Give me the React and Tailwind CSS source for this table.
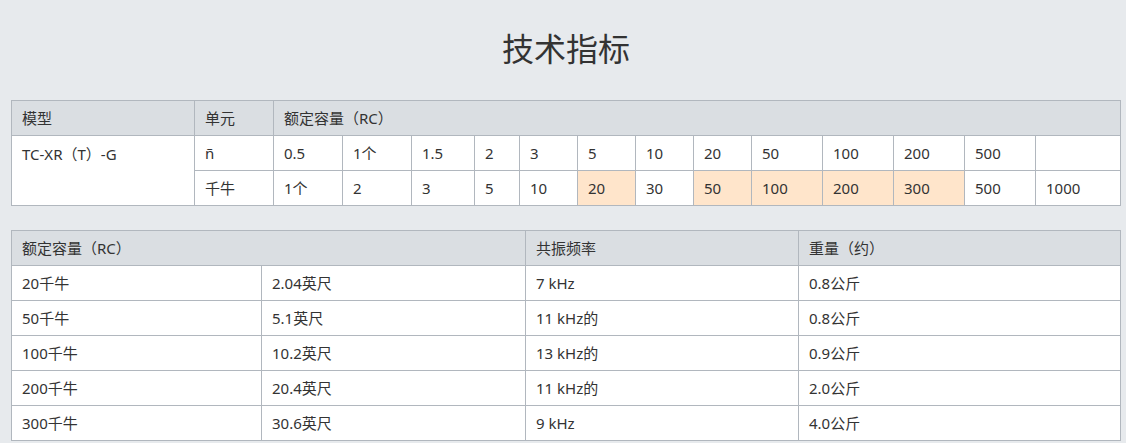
import React from 'react';

const font = { fontFamily: '"Noto Sans", "Noto Sans CJK SC", sans-serif' };

// spec table data
const row1 = ['0.5', '1个', '1.5', '2', '3', '5', '10', '20', '50', '100', '200', '500', ''];
const row2 = [
    ['1个', false], ['2', false], ['3', false], ['5', false], ['10', false], ['20', true], ['30', false],
    ['50', true], ['100', true], ['200', true], ['300', true], ['500', false], ['1000', false],
];
const cols1 = [183, 79, 69, 69, 63, 45, 58, 58, 58, 58, 71, 71, 71, 71, 85];

const specs = [
    ['20千牛', '2.04英尺', '7 kHz', '0.8公斤'],
    ['50千牛', '5.1英尺', '11 kHz的', '0.8公斤'],
    ['100千牛', '10.2英尺', '13 kHz的', '0.9公斤'],
    ['200千牛', '20.4英尺', '11 kHz的', '2.0公斤'],
    ['300千牛', '30.6英尺', '9 kHz', '4.0公斤'],
];
const cols2 = [250, 264, 273, 322];

const cell = 'border border-[#b1b7be] h-[35px] px-[10px] py-0 text-left align-middle font-normal whitespace-nowrap';

export default function App() {
    return (
        <div className="min-h-[443px] bg-[#e7eaed] text-[15px] text-[#333] pl-[11px] pr-[6px]" style={font}>
            {/* Title */}
            <div className="h-[100px] flex items-center justify-center">
                <h1 className="text-[32px] font-normal text-[#333] pl-[1px] pb-[2px]">技术指标</h1>
            </div>

            {/* Capacity table */}
            <table className="w-full table-fixed border-collapse bg-white">
                <colgroup>
                    {cols1.map((w, i) => <col key={i} style={{ width: w }} />)}
                </colgroup>
                <thead>
                    <tr className="bg-[#dadee2]">
                        <th className={cell}>模型</th>
                        <th className={cell}>单元</th>
                        <th className={cell} colSpan={13}>额定容量（RC）</th>
                    </tr>
                </thead>
                <tbody>
                    <tr>
                        <td className={`${cell} !align-top pt-[7px]`} rowSpan={2}>TC-XR（T）-G</td>
                        <td className={cell}>ñ</td>
                        {row1.map((v, i) => <td key={i} className={cell}>{v}</td>)}
                    </tr>
                    <tr>
                        <td className={cell}>千牛</td>
                        {row2.map(([v, hl], i) => (
                            <td key={i} className={`${cell} ${hl ? 'bg-[#ffe5cb]' : ''}`}>{v}</td>
                        ))}
                    </tr>
                </tbody>
            </table>

            {/* Specs table */}
            <table className="w-full table-fixed border-collapse bg-white mt-[24px]">
                <colgroup>
                    {cols2.map((w, i) => <col key={i} style={{ width: w }} />)}
                </colgroup>
                <thead>
                    <tr className="bg-[#dadee2]">
                        <th className={cell} colSpan={2}>额定容量（RC）</th>
                        <th className={cell}>共振频率</th>
                        <th className={cell}>重量（约）</th>
                    </tr>
                </thead>
                <tbody>
                    {specs.map((r, i) => (
                        <tr key={i}>
                            {r.map((v, j) => <td key={j} className={cell}>{v}</td>)}
                        </tr>
                    ))}
                </tbody>
            </table>
        </div>
    );
}
